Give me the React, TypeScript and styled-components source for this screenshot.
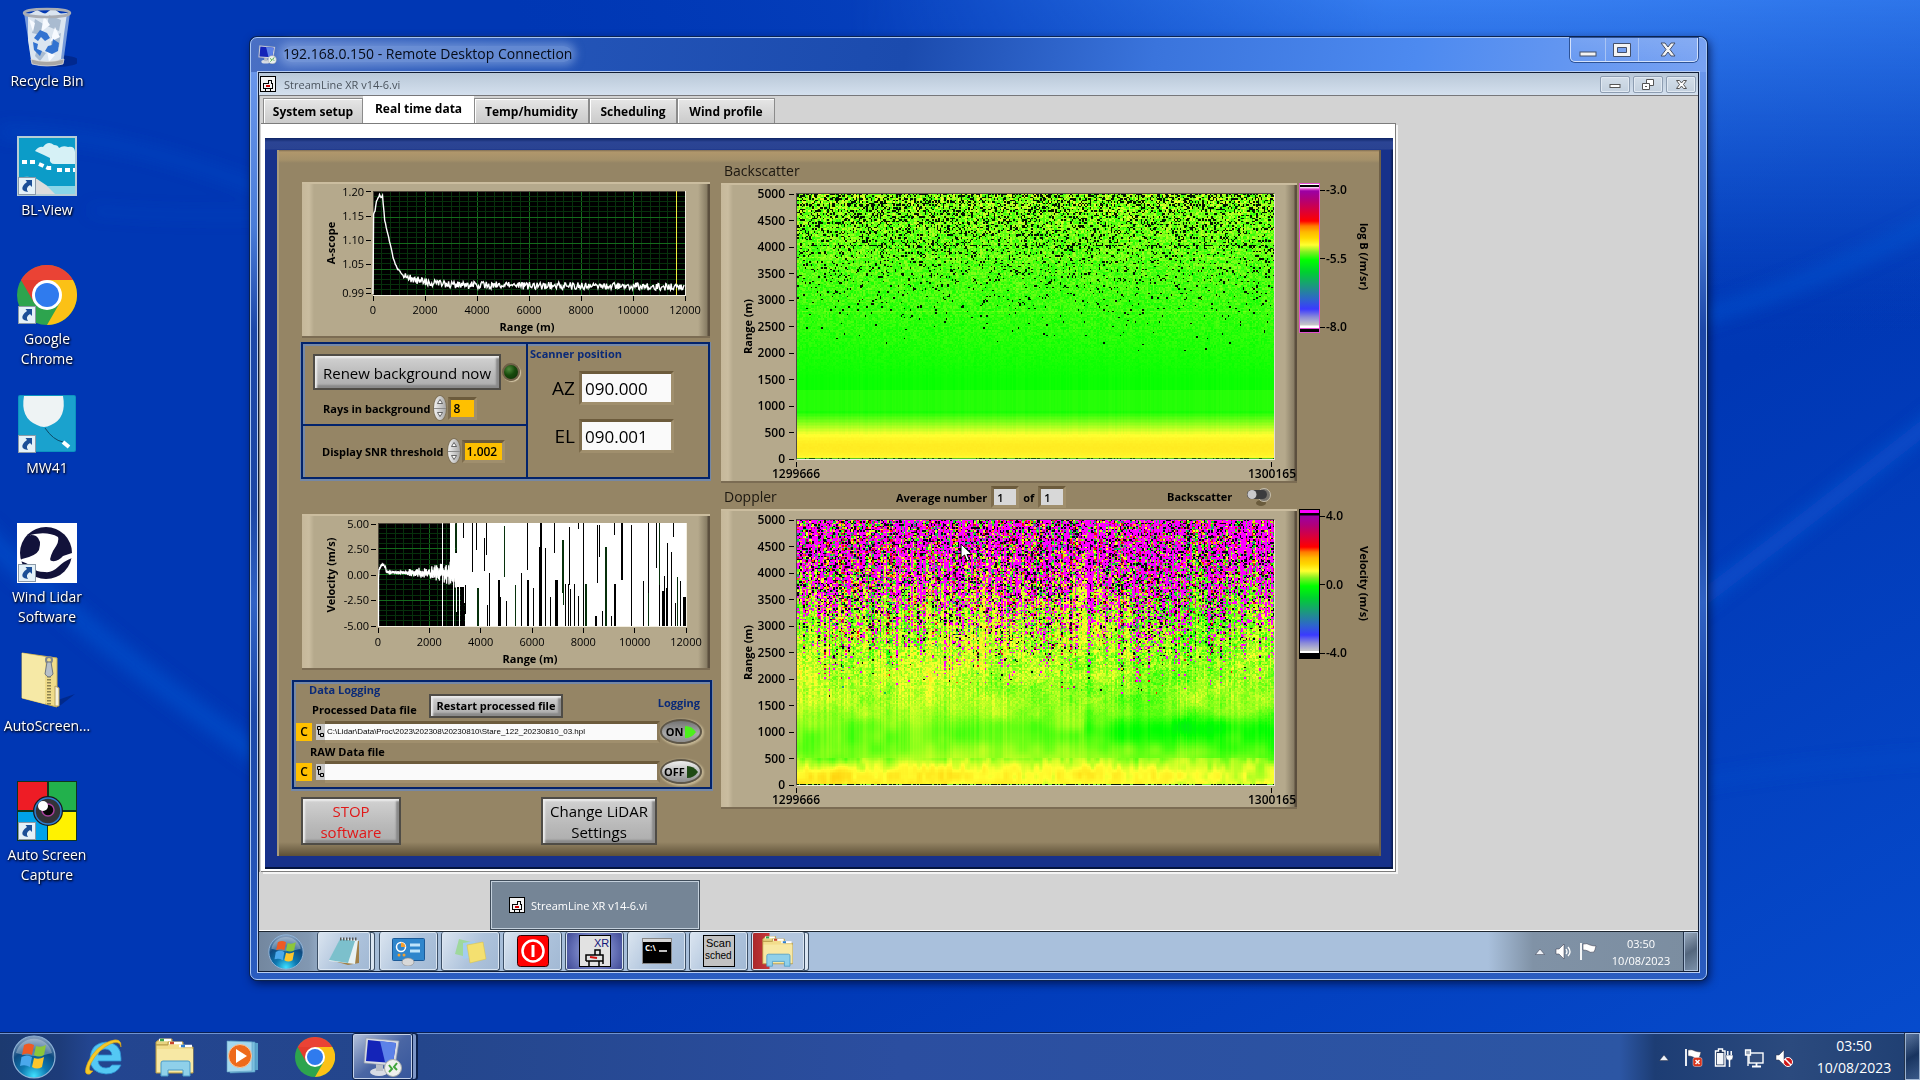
import React, { useEffect, useId, useRef, useState } from "react";
import styled, { createGlobalStyle, css } from "styled-components";

const ui = '"Open Sans", "Noto Sans", "DejaVu Sans", sans-serif';

const GlobalStyle = createGlobalStyle`
  *, *::before, *::after { box-sizing: border-box; }
  html, body, #root { height: 100%; }
  body { margin: 0; overflow: hidden; font-family: ${ui}; background: #0037b4; }
  button, input { font-family: inherit; }
  button { cursor: default; }
`;

/* ---------- desktop ---------- */

const Desktop = styled.div`
  position: relative;
  isolation: isolate;
  display: flex;
  flex-direction: column;
  min-height: 100vh;
`;

const WallpaperSvg = styled.svg`
  position: absolute;
  inset: 0;
  width: 100%;
  height: 100%;
  z-index: -1;
`;

const Workspace = styled.main`
  position: relative;
  flex: 1;
`;

const Shortcuts = styled.nav`
  display: flex;
  flex-direction: column;
  width: 94px;
  padding-top: 7px;
`;

const Shortcut = styled.button`
  display: flex;
  flex-direction: column;
  align-items: center;
  gap: 4px;
  height: 129px;
  padding: 0;
  border: 0;
  background: none;
  color: #fff;
  font-size: 14px;
  line-height: 20px;
  white-space: pre-line;
  text-shadow: 1px 1px 2px #000, 0 1px 3px #001a50;
  svg { flex: none; }
`;

/* ---------- remote desktop window ---------- */

const RemoteWindow = styled.section`
  position: absolute;
  inset: 37px 213px 52px 250px;
  display: flex;
  flex-direction: column;
  padding: 0 7px 7px;
  border: 1px solid #a8c6f4;
  border-radius: 7px;
  background: linear-gradient(100deg, #4a70c4 0, #2455b8 18%, #1b4bae 45%, #3a74dc 62%, #4d8af0 80%, #78a2f2 100%) top / 100% 34px no-repeat,
    linear-gradient(#6f9bee 0, #4a7cd8 20%, #1d48a8 31%, #1c46a4 50%, #3062c4 60%, #1c48a8 72%, #2a5cc0 100%);
  box-shadow: 0 0 0 1px #0a2350, 2px 3px 10px rgba(0, 5, 40, 0.75);
`;

const Caption = styled.header`
  display: flex;
  justify-content: space-between;
  height: 34px;
  padding-right: 1px;
`;

const CaptionTitle = styled.h1`
  display: flex;
  align-items: center;
  gap: 6px;
  height: 32px;
  margin: 0;
  font-size: 14px;
  font-weight: 400;
  color: #050b18;
  span { border-radius: 10px; background: rgba(160, 188, 236, 0.5); box-shadow: 0 0 8px 4px rgba(160, 188, 236, 0.5); line-height: 16px; }
`;

const CaptionButtons = styled.div`
  display: flex;
  height: 24px;
  border: 1px solid #d3e1fb;
  border-top: 0;
  border-radius: 0 0 5px 5px;
  background: linear-gradient(rgba(255, 255, 255, 0.12), rgba(255, 255, 255, 0.03));
  box-shadow: 0 0 0 1px #2d5296;
`;

const CaptionButton = styled.button<{ $w: number }>`
  display: grid;
  place-items: center;
  width: ${(p) => p.$w}px;
  padding: 0;
  border: 0;
  background: none;
  & + & { border-left: 1px solid #a9c4f4; }
`;

const Client = styled.div`
  flex: 1;
  display: flex;
  flex-direction: column;
  min-height: 0;
  border: 1px solid #101c34;
  outline: 1px solid #b7cdf3;
  background: #d3d3d3;
`;

const AppBar = styled.header`
  display: flex;
  align-items: center;
  justify-content: space-between;
  height: 23px;
  padding: 0 2px 0 1px;
  border-bottom: 1px solid #77777a;
  background: linear-gradient(#b9c8d8, #d4e0ee);
`;

const AppTitle = styled.h2`
  display: flex;
  align-items: center;
  gap: 8px;
  margin: 0;
  font-size: 11px;
  font-weight: 400;
  color: #4b545e;
`;

const AppButtons = styled.div`
  display: flex;
  gap: 3px;
`;

const AppButton = styled.button`
  display: grid;
  place-items: center;
  width: 30px;
  height: 17px;
  padding: 0;
  border: 1px solid #8d9db1;
  border-radius: 2px;
  background: linear-gradient(#d3dee9, #c3d0de);
  box-shadow: inset 0 0 0 1px #e1e9f2;
`;

/* ---------- tabs ---------- */

const AppBody = styled.div`
  flex: 1;
  display: flex;
  flex-direction: column;
  align-items: flex-start;
  border-left: 1px solid #8a8a8a;
  padding-left: 1px;
`;

const TabList = styled.div`
  display: flex;
  align-items: flex-end;
  height: 27px;
  padding-left: 2px;
`;

const Tab = styled.button<{ $w: number; $active?: boolean }>`
  width: ${(p) => p.$w}px;
  height: 25px;
  padding: 0;
  border: 1px solid #8b8b8b;
  border-bottom: 0;
  box-shadow: inset 1px 1px 0 #fff;
  background: linear-gradient(#e6e6e6, #d8d8d8 50%, #cbcbcb);
  font-size: 12px;
  font-weight: 700;
  color: #000;
  ${(p) =>
    p.$active &&
    css`
      height: 27px;
      padding-bottom: 3px;
      border-color: #fff;
      background: #fff;
    `}
`;

const TabPage = styled.div`
  align-self: stretch;
  margin-right: 302px;
  padding: 14px 2px 2px 4px;
  border: 1px solid #7c7c7c;
  border-left: 0;
  background: #fff;
  box-shadow: 2px 2px 0 #f4f4f4;
`;

const NavyFrame = styled.div`
  padding: 12px 12px 11px 12px;
  background: linear-gradient(#0e2464 0, #2b4494 4px, #2a4392 11px, transparent 12px), linear-gradient(to left, #07194c 0, #17318a 3px, #17318a 100%);
  border-bottom: 2px solid #04143f;
`;

const FrontPanel = styled.div`
  display: grid;
  grid-template-columns: 420px 1fr;
  column-gap: 9px;
  min-height: 706px;
  padding-left: 15px;
  background: linear-gradient(#7f6d54 0, #b0976c 2px, #a49069 10px, #958565 13px, #958565 calc(100% - 14px), #5d5037 100%);
  box-shadow: inset -2px 0 0 #6f6048, inset 2px 0 0 #a99a7b;
`;

const bevel = css`
  border-top: 2px solid #cbbd9f;
  border-bottom: 2px solid #7b6c53;
  background: linear-gradient(to left, #5b4f3e 0, #5b4f3e 2px, #877c64 3px, rgba(181, 169, 140, 0) 12px),
    linear-gradient(to right, #c6b89a 0, #cabda0 7px, #b5a98c 12px);
`;

const LeftColumn = styled.div`
  display: flex;
  flex-direction: column;
  padding-top: 32px;
`;

const RightColumn = styled.div`
  display: flex;
  flex-direction: column;
`;

const LinePanel = styled.div`
  ${bevel}
  margin: 0 2px 0 10px;
  height: 156px;
  svg { display: block; margin-top: -3px; }
`;

const grooveBox = css`
  border: 2px solid #02236c;
  box-shadow: inset 1px 1px 0 1px #7588a6, 0 1px 0 1px #7588a6;
`;

const ControlGroup = styled.div`
  ${grooveBox}
  display: grid;
  grid-template-columns: 225px 1fr;
  height: 137px;
  margin: 4px 2px 35px 9px;
`;

const ControlLeft = styled.div`
  display: grid;
  grid-template-rows: 82px 1fr;
  border-right: 2px solid #02236c;
`;

const RenewArea = styled.div`
  display: flex;
  flex-direction: column;
  gap: 6px;
  padding: 10px 0 0 10px;
  border-bottom: 2px solid #02236c;
`;

const ThresholdArea = styled.div`
  padding: 13px 0 0 19px;
`;

const FieldRow = styled.div<{ $inset?: number }>`
  display: flex;
  align-items: center;
  gap: 2px;
  padding-left: ${(p) => p.$inset ?? 0}px;
`;

const ButtonRow = styled.div`
  display: flex;
  align-items: center;
  gap: 1px;
`;

const steel = css`
  border: 2px solid #4f4c46;
  background: linear-gradient(#d2d2d2, #b9b9b9 60%, #adadad);
  box-shadow: inset 2px 2px 2px #ececec, inset -3px -3px 2px #8a8a8a;
  padding: 0;
  color: #000;
`;

const PushButton = styled.button<{ $w: number; $h: number; $color?: string }>`
  ${steel}
  width: ${(p) => p.$w}px;
  height: ${(p) => p.$h}px;
  padding-top: 2px;
  font-size: 15px;
  line-height: 21px;
  white-space: pre-line;
  color: ${(p) => p.$color ?? "#000"};
`;

const SmallButton = styled.button`
  ${steel}
  width: 134px;
  height: 24px;
  font-size: 11px;
  font-weight: 700;
`;

const Led = styled.span`
  width: 18px;
  height: 18px;
  border-radius: 50%;
  border: 2px solid #6f6148;
  background: radial-gradient(circle at 35% 30%, #4f8a3c, #174a0c 45%, #0c2c06);
  box-shadow: 1px 1px 1px #d6c8a8;
`;

const Caption11 = styled.label`
  font-size: 11px;
  font-weight: 700;
  color: #000;
  white-space: nowrap;
`;

const BlueCaption = styled.h3`
  margin: 0;
  font-size: 11px;
  line-height: 14px;
  font-weight: 700;
  color: #0a2a78;
`;

const Spinner = styled.span`
  display: grid;
  width: 12px;
  height: 24px;
  margin-left: 2px;
  border-radius: 50%;
  overflow: hidden;
  background: linear-gradient(to right, #f2f2f2, #a8a8a8);
  box-shadow: 0 0 0 1px #7f7259;
`;

const SpinButton = styled.button`
  display: grid;
  place-items: center;
  padding: 0;
  border: 0;
  background: none;
  & + & { border-top: 1px solid #8a8a8a; }
`;

const AmberInput = styled.input<{ $w: number }>`
  width: ${(p) => p.$w}px;
  height: 23px;
  padding: 0 0 0 2px;
  border: 3px solid;
  border-color: #6c5b3c #a08f6d #a08f6d #7d6c4c;
  background: #ffc000;
  font-size: 12px;
  font-weight: 600;
`;

const ScannerArea = styled.div`
  display: flex;
  flex-direction: column;
  padding: 3px 0 0 2px;
`;

const ScannerRow = styled.div`
  display: flex;
  align-items: center;
  justify-content: flex-end;
  gap: 4px;
  padding-right: 34px;
  margin-top: 10px;
  & + & { margin-top: 14px; }
`;

const ScannerLabel = styled.label`
  font-size: 19px;
  line-height: 24px;
`;

const ScannerInput = styled.input`
  width: 95px;
  height: 34px;
  padding: 0 0 0 3px;
  border: 3px solid;
  border-color: #6c5b3c #a08f6d #a08f6d #7d6c4c;
  background: #fafafa;
  font-size: 17px;
`;

const LoggingBox = styled.section`
  ${grooveBox}
  display: grid;
  grid-template-columns: 20px 1fr 50px;
  grid-template-rows: 37px 25px 15px 25px;
  height: 109px;
  margin-top: 10px;
  padding-left: 2px;
`;

const LoggingHead = styled.div`
  grid-column: 1 / 4;
  display: grid;
  grid-template-columns: 118px 1fr auto;
  padding: 0 10px 0 13px;
`;

const LoggingNames = styled.div`
  display: flex;
  flex-direction: column;
  gap: 5px;
  ${BlueCaption} { padding-top: 1px; }
  ${Caption11} { padding-left: 3px; line-height: 16px; }
`;

const HeadButtonCell = styled.div`
  padding: 11px 0 0 2px;
`;

const LoggingCaptionCell = styled.div`
  padding-top: 14px;
`;

const RawCaption = styled.div`
  grid-column: 1 / 4;
  display: flex;
  align-items: center;
  padding-left: 14px;
`;

const DriveButton = styled.button`
  align-self: center;
  width: 16px;
  height: 18px;
  padding: 0;
  border: 0;
  background: #ffc000;
  font-size: 12px;
  font-weight: 600;
`;

const PathField = styled.div`
  display: flex;
  align-items: center;
`;

const PathInput = styled.input`
  flex: 1;
  height: 22px;
  min-width: 0;
  padding: 0 0 0 2px;
  border: 3px solid;
  border-left: 0;
  border-color: #6c5b3c #8b7a5a #a08f6d #7d6c4c;
  background: #fafafa;
  font-family: "Liberation Sans", Arial, sans-serif;
  font-size: 8px;
`;

const Pill = styled.button<{ $on?: boolean }>`
  align-self: center;
  display: flex;
  align-items: center;
  justify-content: center;
  gap: 2px;
  width: 42px;
  height: 25px;
  padding: 0;
  border: 2px solid #5d5648;
  border-radius: 50%;
  background: ${(p) => (p.$on ? "linear-gradient(#747474, #a8a8a8 60%, #8d8d8d)" : "linear-gradient(#f0f0f0, #b4b4b4 60%, #8d8d8d)")};
  box-shadow: 1px 1px 2px 1px #c3b593;
  font-size: 11px;
  font-weight: 700;
`;

const ActionRow = styled.div`
  display: flex;
  justify-content: space-between;
  margin: 8px 55px 0 9px;
`;

/* ---------- heat maps ---------- */

const SectionBar = styled.div<{ $h: number }>`
  display: flex;
  align-items: center;
  height: ${(p) => p.$h}px;
  padding-left: 3px;
`;

const SectionTitle = styled.h3<{ $w?: number }>`
  width: ${(p) => (p.$w ? `${p.$w}px` : "auto")};
  margin: 0;
  font-size: 14px;
  font-weight: 400;
  color: #1c1710;
`;

const BackscatterHead = styled.div`
  display: flex;
  align-items: flex-end;
  height: 33px;
  padding: 0 0 3px 3px;
`;

const BarGroup = styled.div`
  display: flex;
  align-items: center;
  gap: 4px;
  width: 271px;
  padding-top: 2px;
`;

const AverageInput = styled.input`
  width: 28px;
  height: 22px;
  padding: 0 0 0 3px;
  border: 3px solid;
  border-color: #6c5b3c #a08f6d #a08f6d #7d6c4c;
  background: #d8d8d8;
  font-size: 11px;
  font-weight: 600;
`;

const SwitchLabel = styled.label`
  display: flex;
  align-items: center;
  gap: 14px;
  font-size: 11px;
  font-weight: 700;
  input { position: absolute; opacity: 0; }
`;

const ChartRow = styled.div`
  display: flex;
  height: 300px;
`;

const HeatPanel = styled.div`
  ${bevel}
  display: grid;
  grid-template-columns: 18px 39px 479px;
  grid-template-rows: 267px 24px;
  width: 576px;
  padding: 8px 0 0 18px;
`;

const SideLabel = styled.span<{ $down?: boolean }>`
  align-self: center;
  justify-self: center;
  writing-mode: vertical-rl;
  transform: ${(p) => (p.$down ? "none" : "rotate(180deg)")};
  font-size: 11px;
  line-height: 16px;
  font-weight: 700;
  white-space: nowrap;
`;

const YAxis = styled.div`
  display: flex;
  flex-direction: column;
  justify-content: space-between;
  align-items: flex-end;
  margin: -6px 0;
  padding-right: 2px;
`;

const YTick = styled.span`
  display: flex;
  align-items: center;
  gap: 4px;
  height: 14px;
  font-size: 12px;
  line-height: 14px;
  font-weight: 600;
  &::after { content: ""; width: 5px; height: 1px; background: #000; }
`;

const PlotArea = styled.div`
  position: relative;
  border: 1px solid;
  border-color: #4f4a40 #e5dfcf #f5f1e5 #4f4a40;
  canvas { display: block; width: 100%; height: 100%; image-rendering: pixelated; }
`;

const XAxis = styled.div`
  grid-column: 3;
  display: flex;
  justify-content: space-between;
  margin: 2px -21px 0 -24px;
  font-size: 12px;
  line-height: 14px;
  font-weight: 600;
`;

const XTick = styled.span`
  display: flex;
  flex-direction: column;
  align-items: center;
  &::before { content: ""; width: 1px; height: 5px; background: #000; }
`;

const Cursor = styled.svg`
  position: absolute;
  left: 163px;
  top: 23px;
`;

const Ramp = styled.div<{ $kind: "log" | "vel" }>`
  width: 21px;
  height: 150px;
  margin-left: 2px;
  border: 1px solid ${(p) => (p.$kind === "log" ? "#e04fd0" : "#000")};
  background: ${(p) =>
    p.$kind === "log"
      ? "linear-gradient(#fff 0, #fff 1px, #000 1px, #000 3px, #fff 3px, #e04fd0 5px, #9c00a4 7px, #b0007a 15px, #f00 37px, #ff7a00 42px, #ffb800 48px, #ffd800 54px, #ffff30 61px, #80f020 68px, #0f0 76px, #00d030 88px, #20908a 104px, #2f62d0 116px, #3a3aff 125px, #8a8ad8 133px, #c8c8c8 141px, #fff 142px, #fff 144px, #e04fd0 144px, #e04fd0 145px, #000 145px)"
      : "linear-gradient(#ff00ff 0, #ff00ff 3px, #000 3px, #000 5px, #9c00a4 6px, #b0007a 15px, #f00 37px, #ff7a00 42px, #ffb800 48px, #ffd800 54px, #ffff30 61px, #80f020 68px, #0f0 76px, #00d030 88px, #20908a 104px, #2f62d0 116px, #3a3aff 125px, #8a8ad8 133px, #c8c8c8 141px, #fff 141px, #fff 143px, #000 143px)"};
`;

const RampScale = styled.div`
  display: flex;
  flex-direction: column;
  justify-content: space-between;
  width: 32px;
  height: 151px;
  font-size: 12px;
  line-height: 14px;
  font-weight: 600;
`;

const RampTick = styled.span`
  display: flex;
  align-items: center;
  gap: 1px;
  &::before { content: ""; width: 5px; height: 1px; background: #000; }
`;

const RampLabel = styled.div`
  display: flex;
  height: 148px;
  padding-left: 4px;
`;

/* ---------- inner desktop bottom ---------- */

const PreviewStrip = styled.div`
  display: flex;
  align-items: flex-end;
  height: 59px;
  padding-left: 231px;
  border-bottom: 1px solid #fff;
`;

const Preview = styled.button`
  display: flex;
  align-items: center;
  gap: 6px;
  width: 210px;
  height: 50px;
  padding: 0 0 0 18px;
  border: 1px solid #3f4c5a;
  box-shadow: inset 0 0 0 1px #c4d0dc;
  background: #758596;
  color: #fff;
  font-size: 11px;
`;

const InnerBar = styled.footer`
  display: flex;
  align-items: stretch;
  height: 40px;
  border-top: 1px solid #1d2630;
  background: linear-gradient(to right, #73879f 0, #8298b2 50px, #a4bbd6 70px, #a9c0dc 480px, #a9c0dc calc(100% - 210px), #8092a6 calc(100% - 165px), #7b8da0 100%);
`;

const InnerStart = styled.button`
  display: grid;
  place-items: center;
  width: 58px;
  padding: 0 5px 0 0;
  border: 0;
  background: none;
`;

const InnerTask = styled.button<{ $tone?: "xr" | "red"; $stack?: boolean }>`
  display: grid;
  place-items: center;
  width: ${(p) => (p.$stack ? 54 : 59)}px;
  margin-right: ${(p) => (p.$stack ? 8 : 3)}px;
  padding: 0;
  border: 1px solid #3c4f66;
  border-top: 0;
  border-radius: 3px;
  background: ${(p) =>
    p.$tone === "xr"
      ? "radial-gradient(circle, #aebbe4, #6672b8 60%, #3a4490)"
      : p.$tone === "red"
        ? "linear-gradient(to right, #a8282a 0, #c8383a 17px, #b3c6de 18px)"
        : "linear-gradient(120deg, #dbe5f0, #aec3dc 55%, #a2b9d4)"};
  box-shadow: inset 0 0 0 1px #dbe6f2${(p) => (p.$stack ? ", 4px 0 0 -1px #dbe6f2, 4px 0 0 0 #3c4f66" : "")};
`;

const InnerTray = styled.div`
  display: flex;
  align-items: center;
  gap: 6px;
  margin-left: auto;
`;

const Clock = styled.time<{ $size: number; $lh: number; $w: number }>`
  align-self: center;
  width: ${(p) => p.$w}px;
  font-size: ${(p) => p.$size}px;
  line-height: ${(p) => p.$lh}px;
  text-align: center;
  white-space: pre-line;
  color: #fff;
`;

const PeekButton = styled.button<{ $w: number }>`
  align-self: stretch;
  width: ${(p) => p.$w}px;
  padding: 0;
  border: 1px solid rgba(190, 210, 235, 0.75);
  background: linear-gradient(150deg, rgba(200, 215, 235, 0.35), rgba(10, 30, 60, 0.35) 50%, rgba(120, 150, 190, 0.3));
  box-shadow: -1px 0 0 #24344c;
`;

/* ---------- outer taskbar ---------- */

const Taskbar = styled.footer`
  display: flex;
  align-items: stretch;
  height: 48px;
  border-top: 1px solid #0a1f52;
  box-shadow: inset 0 1px 0 #6f93d2;
  background: linear-gradient(to right, #1c3a70 0, #1d3c7a 60px, #234590 90px, #24468c 420px, #2b4ea0 900px, #2c56a4 calc(100% - 300px), #1d3d74 calc(100% - 265px), #2b4a7e calc(100% - 130px), #1f3f72 100%);
`;

const TaskItem = styled.button<{ $w: number; $open?: boolean }>`
  display: grid;
  place-items: center;
  width: ${(p) => p.$w}px;
  padding: 0;
  border: 1px solid transparent;
  background: none;
  ${(p) =>
    p.$open &&
    css`
      margin-right: 5px;
      border-color: #0a1f4a;
      border-radius: 3px;
      background: linear-gradient(140deg, #b6c3dc, #4a66a4 50%, #36569c);
      box-shadow: inset 0 0 0 1px #c4d1e8, 4px 0 0 -1px #7d96c6, 5px 0 0 0 #0a1f4a;
    `}
`;

const Tray = styled.div`
  display: flex;
  align-items: center;
  gap: 11px;
  margin-left: auto;
  padding: 2px 10px 0 0;
`;

/* ---------- colour map and noise ---------- */

type RGB = [number, number, number];

const stops: [number, RGB][] = [
  [0, [200, 200, 200]],
  [0.12, [58, 58, 255]],
  [0.3, [32, 144, 138]],
  [0.48, [0, 255, 0]],
  [0.6, [255, 255, 48]],
  [0.7, [255, 190, 0]],
  [0.78, [255, 0, 0]],
  [1, [160, 0, 164]],
];

function ramp(t: number): RGB {
  if (t < 0) return [0, 0, 0];
  if (t > 1) return [255, 0, 255];
  for (let i = 1; i < stops.length; i++) {
    if (t <= stops[i][0]) {
      const [a, ca] = stops[i - 1];
      const [b, cb] = stops[i];
      const k = (t - a) / (b - a);
      return [0, 1, 2].map((n) => ca[n] + (cb[n] - ca[n]) * k) as RGB;
    }
  }
  return [160, 0, 164];
}

function rng(seed: number) {
  let s = seed;
  return () => {
    s = (s + 0x6d2b79f5) | 0;
    let t = Math.imul(s ^ (s >>> 15), 1 | s);
    t = (t + Math.imul(t ^ (t >>> 7), 61 | t)) ^ t;
    return ((t ^ (t >>> 14)) >>> 0) / 4294967296;
  };
}

function smoothField(seed: number, cols: number, rows: number) {
  const r = rng(seed);
  const g = Array.from({ length: (cols + 2) * (rows + 2) }, () => r() * 2 - 1);
  const ease = (t: number) => t * t * (3 - 2 * t);
  return (u: number, v: number) => {
    const x = u * cols;
    const y = v * rows;
    const xi = Math.floor(x);
    const yi = Math.floor(y);
    const fx = ease(x - xi);
    const fy = ease(y - yi);
    const at = (a: number, b: number) => g[b * (cols + 2) + a];
    const top = at(xi, yi) * (1 - fx) + at(xi + 1, yi) * fx;
    const low = at(xi, yi + 1) * (1 - fx) + at(xi + 1, yi + 1) * fx;
    return top * (1 - fy) + low * fy;
  };
}

const W = 318;
const H = 177;

type Sampler = (x: number, y: number) => RGB;

function backscatter(): Sampler {
  const r = rng(11);
  const column = Array.from({ length: W }, () => r() - 0.5);
  return (x, y) => {
    const h = 5000 * (1 - (y + 0.5) / H);
    if (h < 20) return r() < 0.4 ? [20, 90, 10] : [90, 200, 40];
    const pBlack = h > 1900 ? 0.33 * Math.pow((h - 1900) / 3100, 2) : 0;
    const band = Math.abs(h - 4020) < 15 ? 0.25 : 0;
    if (r() < pBlack + band) return [0, 20, 0];
    let t = 0.485 + column[x] * 0.005;
    const up = Math.max(0, (h - 1500) / 3500);
    t += r() * 0.1 * up + up * up * 0.015;
    if (Math.abs(h - 3800) < 20 || Math.abs(h - 2790) < 16) t += 0.015;
    if (h < 1300) t += 0.012;
    if (h < 900) {
      const k = Math.min(1, (900 - h) / 450);
      t = 0.49 + k * 0.112 + column[x] * 0.006;
    }
    if (h < 420) t = 0.605 + 0.022 * Math.sin(((420 - h) / 400) * Math.PI) + r() * 0.005;
    return ramp(t);
  };
}

function doppler(): Sampler {
  const r = rng(42);
  const column = Array.from({ length: W }, () => r() - 0.5);
  const bias = Array.from({ length: W }, () => r());
  const coarse = smoothField(7, 12, 9);
  const mid = smoothField(19, 36, 22);
  const fine = smoothField(23, 110, 30);
  const edge = smoothField(31, 60, 3);
  return (x, y) => {
    const u = x / W;
    const v = (y + 0.5) / H;
    const h = 5000 * (1 - v);
    if (h < 20) return r() < 0.6 ? [0, 30, 0] : [120, 230, 40];
    const reach = 2250 + edge(u, 0.2) * 450 + column[x] * 1200;
    const pNoise = h > reach ? Math.min(0.95, Math.pow((h - reach) / 1900, 1.1)) : h > 1700 && r() < 0.004 ? 1 : 0;
    if (r() < pNoise) {
      const n = r();
      const magenta = 0.5 + (bias[x] - 0.5) * 0.8;
      if (n < magenta) return [255, 0, 255];
      if (n < magenta + 0.19) return [10, 0, 20];
      return ramp(r() * 0.7 + 0.28);
    }
    let t = 0.56 + coarse(u, v) * 0.02 + mid(u, v) * 0.016;
    t += column[x] * 0.055 * Math.min(1, h / 2600);
    if (h > 1100) t += (r() - 0.5) * 0.1 * Math.min(1, (h - 1100) / 1500);
    const dip = Math.exp(-(((h - 1050) / 300) ** 2));
    const wide = Math.exp(-(((h - 800) / 420) ** 2));
    t -= 0.05 * dip * (u > 0.6 ? 1 : 0.35 + u * 0.3) + 0.02 * wide;
    if (u > 0.6 && h > 500) t -= 0.018 * Math.min(1, (u - 0.6) * 6);
    if (h < 500) t += 0.06 * Math.min(1, (500 - h) / 280) * (1.15 - u * 0.4) + fine(u, v) * 0.022;
    return ramp(t);
  };
}

function HeatMap({ sampler, label }: { sampler: () => Sampler; label: string }) {
  const ref = useRef<HTMLCanvasElement>(null);
  useEffect(() => {
    const ctx = ref.current?.getContext("2d");
    if (!ctx) return;
    const image = ctx.createImageData(W, H);
    const sample = sampler();
    for (let y = 0; y < H; y++) {
      for (let x = 0; x < W; x++) {
        const [a, b, c] = sample(x, y);
        image.data.set([a, b, c, 255], (y * W + x) * 4);
      }
    }
    ctx.putImageData(image, 0, 0);
  }, [sampler]);
  return <canvas ref={ref} width={W} height={H} role="img" aria-label={label} />;
}

const ranges = [5000, 4500, 4000, 3500, 3000, 2500, 2000, 1500, 1000, 500, 0];

function HeatChart({ sampler, label, children }: { sampler: () => Sampler; label: string; children?: React.ReactNode }) {
  return (
    <HeatPanel>
      <SideLabel>Range (m)</SideLabel>
      <YAxis>
        {ranges.map((n) => (
          <YTick key={n}>{n}</YTick>
        ))}
      </YAxis>
      <PlotArea>
        <HeatMap sampler={sampler} label={label} />
        {children}
      </PlotArea>
      <XAxis>
        <XTick>1299666</XTick>
        <XTick>1300165</XTick>
      </XAxis>
    </HeatPanel>
  );
}

function ColourScale({ kind, marks, label }: { kind: "log" | "vel"; marks: string[]; label: string }) {
  return (
    <>
      <Ramp $kind={kind} />
      <RampScale>
        {marks.map((m) => (
          <RampTick key={m}>{m}</RampTick>
        ))}
      </RampScale>
      <RampLabel>
        <SideLabel $down>{label}</SideLabel>
      </RampLabel>
    </>
  );
}

/* ---------- line charts ---------- */

const ChartSvg = styled.svg`
  font-family: ${ui};
  .n { font-size: 11px; }
  .b { font-size: 11px; font-weight: 700; }
`;

function Grid({ x, y, w, h, rows }: { x: number; y: number; w: number; h: number; rows: number }) {
  const minorX = Array.from({ length: 35 }, (_, i) => x + ((i + 1) * w) / 36);
  const minorY = Array.from({ length: rows * 5 - 1 }, (_, i) => y + ((i + 1) * h) / (rows * 5));
  return (
    <g shapeRendering="crispEdges">
      <rect x={x} y={y} width={w} height={h} fill="#000" />
      {minorX.map((v, i) => (
        <path key={`x${i}`} d={`M${v} ${y}v${h}`} stroke={i % 6 === 5 ? "#146a1c" : "#07300c"} />
      ))}
      {minorY.map((v, i) => (
        <path key={`y${i}`} d={`M${x} ${v}h${w}`} stroke={i % 5 === 4 ? "#146a1c" : "#07300c"} />
      ))}
      <path d={`M${x} ${y + h}V${y}H${x + w}`} stroke="#4b463b" fill="none" />
      <path d={`M${x} ${y + h}H${x + w}V${y}`} stroke="#f3eee0" fill="none" />
    </g>
  );
}

function RangeAxis({ x, w, y }: { x: number; w: number; y: number }) {
  return (
    <>
      {[0, 1, 2, 3, 4, 5, 6].map((i) => (
        <g key={i}>
          <path d={`M${x + (i * w) / 6} ${y}v5`} stroke="#000" shapeRendering="crispEdges" />
          <text className="n" x={x + (i * w) / 6} y={y + 18} textAnchor="middle">
            {i * 2000}
          </text>
        </g>
      ))}
    </>
  );
}

const decay: [number, number][] = [
  [71, 113], [71.6, 33], [73, 30], [74.5, 20], [77.5, 14], [79, 16], [80.5, 15], [82.7, 39], [86, 54], [88.8, 66],
  [91.7, 79], [95, 87], [101, 94], [109, 98], [123.5, 101], [152, 104], [383, 106],
];

function AScope() {
  const r = rng(5);
  const pts: string[] = [];
  for (let i = 1; i < decay.length; i++) {
    const [x0, y0] = decay[i - 1];
    const [x1, y1] = decay[i];
    const n = Math.max(1, Math.round((x1 - x0) * 1.3));
    for (let k = 0; k < n; k++) {
      const amp = x0 > 96 ? 7.5 : 1.5;
      pts.push(`${(x0 + ((x1 - x0) * k) / n).toFixed(1)},${(y0 + ((y1 - y0) * k) / n + (r() - 0.5) * amp).toFixed(1)}`);
    }
  }
  const marks: [string, number][] = [["1.20", 10.5], ["1.15", 35], ["1.10", 59], ["1.05", 83], ["0.99", 112]];
  return (
    <ChartSvg width="408" height="156" role="img" aria-label="A-scope against range">
      <Grid x={71} y={10} w={312} h={104} rows={4} />
      <path d="M374.5 10v104" stroke="#f2ea3a" shapeRendering="crispEdges" />
      <polyline points={pts.join(" ")} fill="none" stroke="#fff" strokeWidth="1.4" />
      {marks.map(([t, y]) => (
        <g key={t}>
          <text className="n" x="62" y={y + 4} textAnchor="end">{t}</text>
          <path d={`M64 ${y}h5`} stroke="#000" shapeRendering="crispEdges" />
        </g>
      ))}
      <path d="M64 107h5" stroke="#000" shapeRendering="crispEdges" />
      <RangeAxis x={71} w={312} y={115} />
      <text className="b" x="225" y="150" textAnchor="middle">Range (m)</text>
      <text className="b" transform="translate(33 62) rotate(-90)" textAnchor="middle">A-scope</text>
    </ChartSvg>
  );
}

/* Dark gaps in the saturated part of the velocity trace: x, top, bottom, width. */
const gaps: number[][] = [
  [154.3, 10, 38, 1], [160.5, 10, 25, 1], [170.3, 10, 59, 1], [174.3, 10, 37, 1], [182.2, 25, 58, 1], [184, 10, 42, 1],
  [201.5, 13, 64, 1], [224.6, 10, 57, 1], [236.5, 34, 113, 2], [238.2, 10, 113, 2], [242.5, 35, 113, 1], [252.3, 10, 40, 1],
  [259.5, 27, 80, 2], [267.4, 14, 72, 1], [275.5, 10, 16, 1], [281, 10, 113, 1], [294.8, 12, 70, 1], [297, 12, 44, 1],
  [303, 34, 113, 2], [311.7, 10, 22, 1], [319, 10, 67, 2], [329.4, 12, 113, 1], [345.6, 10, 113, 1], [353.6, 10, 55, 1],
  [357, 10, 84, 1], [365.4, 30, 113, 1], [368.7, 39, 113, 1], [371.4, 10, 24, 1], [159, 74, 113, 3], [162.5, 72, 101, 1],
  [174.6, 75, 113, 2], [185.4, 92, 113, 1], [187.4, 60, 113, 1], [196.4, 67, 113, 2], [198, 84, 113, 1], [204, 88, 113, 1],
  [213.3, 72, 113, 1], [219.4, 60, 113, 1], [225.4, 67, 113, 2], [231.4, 75, 113, 1], [248.4, 84, 113, 1], [252.8, 67, 113, 3],
  [261, 72, 92, 1], [263.2, 71, 113, 1], [265.5, 71, 113, 1], [268.2, 76, 113, 1], [272, 71, 113, 1], [275.5, 83, 113, 1],
  [282.5, 71, 113, 2], [293.4, 103, 113, 2], [300.4, 98, 113, 1], [309, 103, 113, 1], [312, 71, 113, 2], [340.6, 68, 113, 1],
  [346.4, 80, 113, 1], [356.5, 72, 113, 1], [359.7, 78, 113, 2], [361.5, 63, 113, 1], [363.8, 75, 113, 1], [373, 90, 113, 1],
  [375.4, 64, 113, 1], [378, 68, 113, 1], [380.5, 84, 113, 3],
];

function VelocityChart() {
  const r = rng(8);
  const trace: string[] = ["M76.5 113V66"];
  for (let x = 77; x < 154; x += 0.8) {
    const u = (x - 77) / 77;
    const mean = x < 84 ? 56 - Math.sin(((x - 77) / 7) * Math.PI) * 4 : 59 + u * 1.5;
    const amp = u < 0.35 ? 1.6 : 2 + Math.pow(u, 2.2) * 13;
    trace.push(`L${x.toFixed(1)} ${(mean - r() * amp).toFixed(1)}L${(x + 0.4).toFixed(1)} ${(mean + r() * amp).toFixed(1)}`);
  }
  const marks: [string, number][] = [["5.00", 11], ["2.50", 36], ["0.00", 62], ["-2.50", 87], ["-5.00", 113]];
  return (
    <ChartSvg width="408" height="156" role="img" aria-label="Velocity against range">
      <Grid x={76} y={10} w={308} h={103} rows={4} />
      <path d={trace.join("")} fill="none" stroke="#fff" strokeWidth="1.3" />
      <g fill="#fff" shapeRendering="crispEdges">
        <rect x="140" y="10" width="1" height="103" />
        <rect x="148" y="10" width="5" height="52" />
        <rect x="151" y="62" width="1" height="51" />
        <rect x="153" y="40" width="7" height="34" />
        <rect x="155" y="10" width="5" height="64" />
        <rect x="154" y="74" width="1" height="25" />
        <rect x="157" y="74" width="1" height="39" />
        <rect x="160" y="10" width="3" height="80" />
        <rect x="163" y="10" width="221" height="103" />
      </g>
      <g shapeRendering="crispEdges">
        {gaps.map(([x, a, b, w], i) => (
          <rect key={i} x={Math.round(x)} y={a} width={w} height={b - a} fill={i % 6 === 0 ? "#06300b" : "#000"} />
        ))}
      </g>
      {marks.map(([t, y]) => (
        <g key={t}>
          <text className="n" x="67" y={y + 4} textAnchor="end">{t}</text>
          <path d={`M69 ${y}h5`} stroke="#000" shapeRendering="crispEdges" />
        </g>
      ))}
      <RangeAxis x={76} w={308} y={115} />
      <text className="b" x="228" y="150" textAnchor="middle">Range (m)</text>
      <text className="b" transform="translate(33 62) rotate(-90)" textAnchor="middle">Velocity (m/s)</text>
    </ChartSvg>
  );
}

/* ---------- drawings ---------- */

function Wallpaper() {
  return (
    <WallpaperSvg viewBox="0 0 1920 1080" preserveAspectRatio="none" aria-hidden="true">
      <defs>
        <radialGradient id="wTop" cx="0.78" cy="-0.06" r="0.52" gradientTransform="matrix(1 0 0 0.75 0 0)">
          <stop offset="0" stopColor="#4a90ff" />
          <stop offset="0.35" stopColor="#2a74ec" stopOpacity="0.85" />
          <stop offset="1" stopColor="#0646c4" stopOpacity="0" />
        </radialGradient>
        <linearGradient id="wTopEdge" x1="0" y1="0" x2="0" y2="1">
          <stop offset="0" stopColor="#3a84f4" stopOpacity="0.85" />
          <stop offset="1" stopColor="#0348c8" stopOpacity="0" />
        </linearGradient>
        <linearGradient id="wSide" x1="0" y1="0" x2="1" y2="0">
          <stop offset="0" stopColor="#fff" stopOpacity="0" />
          <stop offset="0.5" stopColor="#fff" stopOpacity="1" />
        </linearGradient>
        <mask id="wMask"><rect x="850" width="1070" height="330" fill="url(#wSide)" /></mask>
        <linearGradient id="wLow" x1="0" y1="0" x2="1" y2="1">
          <stop offset="0.62" stopColor="#0a55d8" stopOpacity="0" />
          <stop offset="1" stopColor="#0a58dc" stopOpacity="0.65" />
        </linearGradient>
        <filter id="soft" x="-20%" y="-50%" width="140%" height="200%"><feGaussianBlur stdDeviation="8" /></filter>
      </defs>
      <rect width="1920" height="1080" fill="#0037b4" />
      <rect x="850" width="1070" height="330" fill="url(#wTopEdge)" mask="url(#wMask)" />
      <rect width="1920" height="1080" fill="url(#wTop)" opacity="0.4" />
      <rect width="1920" height="1080" fill="url(#wLow)" />
      <g filter="url(#soft)" fill="none" stroke="#0a58d4">
        <path d="M0 132Q130 132 300 205" strokeWidth="9" opacity="0.35" />
        <path d="M90 210Q180 218 300 214" strokeWidth="5" opacity="0.3" />
        <path d="M-20 530Q90 640 280 770Q420 860 600 960" strokeWidth="20" opacity="0.55" />
        <path d="M1690 320Q1800 290 1940 218" strokeWidth="16" opacity="0.5" />
        <path d="M1690 608Q1800 525 1940 415" strokeWidth="16" opacity="0.65" />
        <path d="M1690 784Q1800 764 1940 756" strokeWidth="5" opacity="0.5" />
      </g>
    </WallpaperSvg>
  );
}

function LinkArrow() {
  return (
    <g>
      <rect x="1.5" y="41.5" width="17" height="17" fill="#e4f1f8" stroke="#8b9aa8" />
      <path d="M8.5 44H15v7l-2-2q-5 3-2 7Q3 55 6 50q1-2 4-4z" fill="#1c4f96" />
    </g>
  );
}

const Icon60 = ({ children, arrow = true }: { children: React.ReactNode; arrow?: boolean }) => (
  <svg width="60" height="60" viewBox="0 0 60 60" aria-hidden="true">
    {children}
    {arrow && <LinkArrow />}
  </svg>
);

const BinIcon = () => (
  <Icon60 arrow={false}>
    <ellipse cx="40" cy="54" rx="22" ry="6" fill="#001a6a" opacity="0.5" />
    <path d="M7 6H53L46 57Q30 61 15 57z" fill="#9fbce6" opacity="0.75" />
    <path d="M11 8l9-5 8 4 8-6 8 6 6-1-3 21-3 25-8 4-12-1-10-2-3-20z" fill="#dbe5f0" />
    <path d="M18 12l10 6-4 10-9-2zM32 8l12 5-2 11-12-5zM34 30l10-4-2 14-8 2zM20 42l9 4-6 8-5-5z" fill="#a9bbd0" />
    <path d="M27 9l6 9-9 7zM38 20l5 10-10 5zM30 44l8 4-6 7zM12 12l6 4-2 9z" fill="#f7faff" />
    <path d="M17 31l6-8 7 3 3 5-5 3-4-4-3 4zM16 35l5 2-1 5 5 2-2 5-6-6zM28 44l3-5 4-1 1-6 6 4-1 8-6 3z" fill="#3272d0" />
    <ellipse cx="30" cy="6" rx="23" ry="4" fill="none" stroke="#a9adb4" strokeWidth="2.5" />
    <path d="M14 52Q30 57 47 52L46 57Q30 61 15 57z" fill="#a8a6a4" stroke="#e6e4e0" strokeWidth="0.7" />
  </Icon60>
);

const BlViewIcon = () => (
  <Icon60>
    <rect width="60" height="60" fill="#b6cdd6" />
    <rect x="2" y="2" width="56" height="56" fill="#0c9cc8" />
    <path d="M18 15q4-5 8-4 5-7 11-2 4 0 5 3 4-3 9-1 7-1 7 5v12H38q-6 0-5-6-6-3-15-7" fill="#d6f1f6" />
    <path d="M5 26H18M22 28l9 4h5M40 34H58" stroke="#fff" strokeWidth="4" strokeDasharray="5 3" fill="none" />
    <path d="M2 42q10-3 18 1l12 8 8 7H2z" fill="#dcdcdc" />
    <path d="M30 50H58v8H38z" fill="#8ad6e8" />
  </Icon60>
);

function ChromeArt() {
  return (
    <g>
      <circle cx="30" cy="30" r="30" fill="#2da44e" />
      <path d="M30 30L4 15A30 30 0 0 1 56 15z" fill="#ea4335" />
      <path d="M30 15H56A30 30 0 0 1 30 60L43 37.5z" fill="#fbc116" />
      <path d="M4 15L17 37.5L30 30V15z" fill="#e33b2e" />
      <circle cx="30" cy="30" r="15" fill="#fff" />
      <circle cx="30" cy="30" r="12" fill="#2f7bee" />
    </g>
  );
}

const ChromeIcon = () => <Icon60><ChromeArt /></Icon60>;

const BalloonIcon = () => (
  <Icon60>
    <rect x="1" y="1" width="58" height="57" rx="2" fill="#0b93c0" />
    <rect x="2" y="2" width="56" height="55" rx="1" fill="#1aa2ce" />
    <path d="M7 2H46Q50 24 34 31Q27 35 20 31Q3 24 7 2z" fill="#eef3f4" />
    <path d="M28 34Q36 46 46 48" stroke="#0d4a66" fill="none" />
    <path d="M46 48l6 5" stroke="#fff" strokeWidth="4" />
  </Icon60>
);

const LidarIcon = () => (
  <Icon60>
    <rect width="60" height="60" fill="#fff" />
    <circle cx="29" cy="30" r="26" fill="#12123a" />
    <path d="M9 13q20-6 32 1 2 4-5 14-5 10-1 10 6 1 11-5l9-3v5q-8 3-14 9-6 6-13 5-10 0-11-4-8-6-15-7l3-2q14-3 17-9 3-10-3-14-4-2-10 0z" fill="#fff" />
  </Icon60>
);

const ZipIcon = () => (
  <Icon60 arrow={false}>
    <path d="M35 50L58 42L40 56z" fill="#001f70" opacity="0.6" />
    <path d="M5 1L40 6V55L5 46z" fill="#efdc8a" stroke="#c9b055" />
    <path d="M5 1L28 5V52L5 46z" fill="#f6e9a6" />
    <path d="M38 34l4 2v18h-4z" fill="#f6f2dc" stroke="#b8a460" />
    <path d="M32 12V54" stroke="#8d8350" strokeWidth="4" strokeDasharray="1.5 1.5" />
    <circle cx="32" cy="8" r="3" fill="none" stroke="#7f868e" strokeWidth="2" />
    <path d="M30 10h4l2 12q-4 6-8 0z" fill="#b8c0c8" stroke="#6f7780" />
  </Icon60>
);

const CaptureIcon = () => (
  <Icon60>
    <rect width="60" height="60" fill="#10361c" />
    <path d="M1 1H30V29H1z" fill="#ee1c25" />
    <path d="M32 1H59V29H32z" fill="#22b14c" />
    <path d="M1 31H30V59H1z" fill="#00a2e8" />
    <path d="M31 31H59V59H31z" fill="#fff200" />
    <circle cx="31" cy="30" r="15" fill="#1a1a1e" />
    <circle cx="31" cy="30" r="13" fill="#333338" stroke="#2f7fd0" strokeWidth="1.5" />
    <circle cx="31" cy="29" r="6" fill="#060606" stroke="#a8409c" strokeWidth="1.5" />
    <circle cx="26" cy="25" r="5" fill="#fff" />
  </Icon60>
);

const StartOrb = ({ size }: { size: number }) => {
  const id = useId();
  return (
    <svg width={size} height={size} viewBox="0 0 44 44" aria-hidden="true">
      <defs>
        <radialGradient id={id} cx="0.5" cy="0.95" r="0.9">
          <stop offset="0" stopColor="#3fe0ff" />
          <stop offset="0.35" stopColor="#0e78b0" />
          <stop offset="0.7" stopColor="#0e4a80" />
          <stop offset="1" stopColor="#7d98b8" />
        </radialGradient>
      </defs>
      <circle cx="22" cy="22" r="21" fill={`url(#${id})`} stroke="#8fb4d8" strokeWidth="1.2" />
      <path d="M4 18A18.5 18.5 0 0 1 40 18Q22 24 4 18z" fill="#fff" opacity="0.3" />
      <path d="M12 10Q17 7 22 10L20 20Q15 17 10 20z" fill="#ee5a24" />
      <path d="M24 11Q29 13 34 10L32 20Q27 23 22 20z" fill="#8cc63a" />
      <path d="M9.5 22Q15 19 20 22L18 32Q13 29 8 31z" fill="#4aa8ec" />
      <path d="M22 23Q27 25 32 22L30 32Q25 35 20 32z" fill="#fdc62c" />
    </svg>
  );
};

const IeIcon = () => (
  <svg width="40" height="38" viewBox="0 0 40 38" aria-hidden="true">
    <path d="M37 23H14q1 7 8 7 4 0 6-3h9q-4 9-15 9Q6 35 6 20 7 5 22 4q15 1 15 16zM14 17H28q-1-6-7-6t-7 6z" fill="#54c8f4" stroke="#2b8fd0" strokeWidth="0.8" />
    <path d="M6 36Q-2 38 4 24Q12 8 26 3Q38-1 37 9Q36 2 26 6Q14 12 7 25Q3 34 9 33z" fill="#f6c928" stroke="#d9a010" strokeWidth="0.6" />
  </svg>
);

const FolderIcon = ({ size }: { size: number }) => (
  <svg width={size} height={size} viewBox="0 0 40 40" aria-hidden="true">
    <path d="M1 5L5 2H17V8H1z" fill="#e8d480" stroke="#b89c48" />
    <path d="M4 3H16" stroke="#fff" strokeWidth="2.5" />
    <path d="M5 3h4" stroke="#3aa24c" strokeWidth="2.5" />
    <path d="M1 8H13V5H28V10H38V36H1z" fill="#f2dd8c" stroke="#b89c48" />
    <path d="M14 6H27" stroke="#fff" strokeWidth="2.5" />
    <path d="M15 6h4" stroke="#c8442c" strokeWidth="2.5" />
    <path d="M24 9H37" stroke="#fff" strokeWidth="2.5" />
    <path d="M26 9h4" stroke="#2f7fd0" strokeWidth="2.5" />
    <path d="M2 12H38V35H2z" fill="#f7e8a4" />
    <path d="M6 39V26q0-2 2-2H33q2 0 2 2V39H28V33H13V39z" fill="#8fd0ea" stroke="#4a9ac8" />
  </svg>
);

const PlayerIcon = () => (
  <svg width="34" height="34" viewBox="0 0 34 34" aria-hidden="true">
    <path d="M8 2L32 3V30L8 32z" fill="#5aa4cc" />
    <path d="M4 1L29 2V32L4 33z" fill="#7cc0e0" stroke="#4a90b8" strokeWidth="0.6" />
    <path d="M1 1L26 2V31L1 32z" fill="#a4d8ee" stroke="#5a9cc0" strokeWidth="0.6" />
    <circle cx="14" cy="16" r="11.5" fill="#ee6a1c" stroke="#f8c8a0" />
    <path d="M10 9L21 16L10 23z" fill="#fff" />
  </svg>
);

const RdpIcon = ({ size }: { size: number }) => (
  <svg width={size} height={size} viewBox="0 0 40 40" aria-hidden="true">
    <ellipse cx="16" cy="35" rx="9" ry="4" fill="#d8dce4" />
    <path d="M13 27h7v7h-7z" fill="#b8bec8" />
    <path d="M3 1L36 4L32 29L1 26z" fill="#d8dce4" stroke="#8e98a8" strokeWidth="0.7" />
    <path d="M5 3L33 6L30 26L3 24z" fill="#1424b8" />
    <path d="M17 4L33 6L30 26L22 25z" fill="#5c82e8" />
    <circle cx="30" cy="31" r="8.5" fill="#eef0ee" stroke="#a4aaa8" />
    <path d="M26 28l3 4-3 3M34 26l-3 4 3 3" fill="none" stroke="#3fa43a" strokeWidth="2" />
  </svg>
);

const ViIcon = ({ size }: { size: number }) => (
  <svg width={size} height={size} viewBox="0 0 16 16" aria-hidden="true" shapeRendering="crispEdges">
    <rect x="0.5" y="0.5" width="15" height="15" fill="#f4f4f4" stroke="#000" />
    <path d="M3.500 13V7.500H8.500V4.500h3v3h1V13M3 12.500h10M5.500 15v-3M10.500 15v-3" fill="none" stroke="#000" />
    <path d="M6 9l4 2M10 9l-4 2" stroke="#c00" />
  </svg>
);

const XrIcon = () => (
  <svg width="32" height="32" viewBox="0 0 32 32" aria-hidden="true">
    <rect x="0.5" y="0.5" width="31" height="31" fill="#e2e2e2" stroke="#000" />
    <text x="15" y="12" fontSize="11" fontFamily="Liberation Sans, Arial, sans-serif" fill="#14147a">XR</text>
    <path d="M7 26V20H16V15H21V20H24V29M7 26H24M10 26V31M20 26V31M16 20H21" fill="none" stroke="#000" strokeWidth="1.5" />
    <path d="M11 22l7 1" stroke="#d01010" strokeWidth="2" />
  </svg>
);

const StopIcon = () => (
  <svg width="32" height="32" viewBox="0 0 32 32" aria-hidden="true">
    <rect x="0.5" y="0.5" width="31" height="31" rx="3" fill="#f00" stroke="#300" />
    <circle cx="16" cy="16" r="10.5" fill="none" stroke="#fff" strokeWidth="2.5" />
    <path d="M16 10v12" stroke="#fff" strokeWidth="3" />
  </svg>
);

const NotepadIcon = () => (
  <svg width="32" height="30" viewBox="0 0 32 30" aria-hidden="true">
    <path d="M14 3L31 5V27L20 29L2 24z" fill="#a08048" />
    <path d="M13 2L30 4L27 28L1 25z" fill="#e8f2f4" />
    <path d="M12 3L27 5L20 27L1 24z" fill="#7cc0cc" />
    <path d="M12 3H29" stroke="#555" strokeWidth="3" strokeDasharray="1.5 1.5" />
  </svg>
);

const PanelIcon = () => (
  <svg width="33" height="29" viewBox="0 0 33 29" aria-hidden="true">
    <rect x="0.5" y="1.5" width="32" height="22" rx="1" fill="#2f86cc" stroke="#1b5a98" />
    <circle cx="9" cy="10" r="4.5" fill="none" stroke="#fff" strokeWidth="1.5" />
    <path d="M9 10V5.5A4.5 4.5 0 0 1 13.5 10z" fill="#f4a030" />
    <path d="M18 8H28M18 14H28" stroke="#bfe4fa" strokeWidth="3" />
    <circle cx="7" cy="18" r="1.5" fill="#f4a030" />
    <circle cx="12" cy="18" r="1.5" fill="#f4a030" />
    <ellipse cx="16" cy="25" rx="6" ry="4" fill="#d8d8d8" stroke="#888" strokeWidth="0.6" />
  </svg>
);

const NotesIcon = () => (
  <svg width="32" height="26" viewBox="0 0 32 26" aria-hidden="true">
    <path d="M4 1L16 4L12 19L0 16z" fill="#9ed89c" />
    <path d="M8 5L20 3L22 19L8 21z" fill="#a4cdf0" />
    <path d="M12 7L28 4L31 21L15 25z" fill="#f4e070" stroke="#d8c040" strokeWidth="0.5" />
  </svg>
);

const ConsoleIcon = () => (
  <svg width="30" height="26" viewBox="0 0 30 26" aria-hidden="true">
    <rect x="0.5" y="0.5" width="29" height="25" fill="#000" stroke="#888" />
    <rect x="1" y="1" width="28" height="3" fill="#d8d8d8" />
    <text x="3" y="13" fontSize="8" fontWeight="700" fill="#fff">C:\</text>
    <path d="M17 13h8" stroke="#fff" strokeWidth="1.5" />
  </svg>
);

const SchedIcon = () => (
  <svg width="32" height="32" viewBox="0 0 32 32" aria-hidden="true" fontFamily="Liberation Sans, Arial, sans-serif">
    <rect x="0.5" y="0.5" width="31" height="31" fill="#c2c2c2" stroke="#000" />
    <text x="3" y="12" fontSize="11">Scan</text>
    <text x="2" y="24" fontSize="10">sched</text>
  </svg>
);

const UpArrow = () => (
  <svg width="18" height="6" viewBox="-4.5 0 18 6" aria-hidden="true"><path d="M0 5.5L4.5 0L9 5.5z" fill="#eef2f8" stroke="#223" strokeWidth="0.4" /></svg>
);

const Flag = ({ bad }: { bad?: boolean }) => (
  <svg width="19" height="20" viewBox="0 0 19 20" aria-hidden="true">
    <path d="M2 1v17" stroke="#fff" strokeWidth="1.8" />
    <path d="M4 2q4-1 7 1 3 1 6 1-1 4-2 6-4 1-6-1-2-1-5-1z" fill="#fff" stroke="#334" strokeWidth="0.5" />
    {bad && (
      <g>
        <rect x="9" y="9.5" width="9" height="9" rx="2" fill="#d8341c" stroke="#fff" strokeWidth="0.4" />
        <path d="M11.500 12l4 4M15.500 12l-4 4" stroke="#fff" strokeWidth="1.5" />
      </g>
    )}
  </svg>
);

const Speaker = ({ muted }: { muted?: boolean }) => (
  <svg width="18" height="20" viewBox="0 0 18 20" aria-hidden="true">
    <path d="M1 7h3l5-5v15l-5-5H1z" fill="#fff" stroke="#334" strokeWidth="0.5" />
    {muted ? (
      <g>
        <circle cx="13" cy="14" r="4.5" fill="#d01818" stroke="#fff" />
        <path d="M10 11l6 6" stroke="#fff" strokeWidth="1.5" />
      </g>
    ) : (
      <path d="M11 7q2 3 0 5M13 5q4 5 0 9" fill="none" stroke="#fff" strokeWidth="1.3" />
    )}
  </svg>
);

const Battery = () => (
  <svg width="19" height="20" viewBox="0 0 19 20" aria-hidden="true">
    <path d="M1.500 3h3V1h4v2h2.500v15h-9.500z" fill="#1f3358" stroke="#fff" strokeWidth="1.4" />
    <path d="M3 5h6.500v11.500H3z" fill="#f4f6fa" />
    <path d="M12 7h7v2q0 3-3 3.500h-1q-3-.5-3-3.500z" fill="#fff" stroke="#1f3358" strokeWidth="0.5" />
    <path d="M13.800 3v4M17.200 3v4M15.500 12v7" stroke="#fff" strokeWidth="1.500" />
  </svg>
);

const Network = () => (
  <svg width="20" height="20" viewBox="0 0 20 20" aria-hidden="true">
    <rect x="5" y="5" width="14" height="10" fill="#35507e" stroke="#fff" strokeWidth="1.4" />
    <path d="M8 18.5h9M12.5 15v3" stroke="#fff" strokeWidth="1.8" />
    <path d="M1.5 2h5v5h-5zM4 7v11" fill="#9aa6b8" stroke="#fff" strokeWidth="1.3" />
  </svg>
);

const shortcuts = [
  { name: "Recycle Bin", icon: <BinIcon /> },
  { name: "BL-View", icon: <BlViewIcon /> },
  { name: "Google\nChrome", icon: <ChromeIcon /> },
  { name: "MW41", icon: <BalloonIcon /> },
  { name: "Wind Lidar\nSoftware", icon: <LidarIcon /> },
  { name: "AutoScreen...", icon: <ZipIcon /> },
  { name: "Auto Screen\nCapture", icon: <CaptureIcon /> },
];

const tabs = [
  { name: "System setup", w: 100 },
  { name: "Real time data", w: 111 },
  { name: "Temp/humidity", w: 115 },
  { name: "Scheduling", w: 88 },
  { name: "Wind profile", w: 98 },
];

function Spin({ label }: { label: string }) {
  return (
    <Spinner>
      <SpinButton type="button" aria-label={`Increase ${label}`}>
        <svg width="6" height="5" viewBox="0 0 6 5"><path d="M3 0.5L5.5 4.5H0.5z" fill="#fff" stroke="#444" strokeWidth="0.8" /></svg>
      </SpinButton>
      <SpinButton type="button" aria-label={`Decrease ${label}`}>
        <svg width="6" height="5" viewBox="0 0 6 5"><path d="M3 4.5L5.5 0.5H0.5z" fill="#fff" stroke="#444" strokeWidth="0.8" /></svg>
      </SpinButton>
    </Spinner>
  );
}

function PathRow({ id, label, value, on }: { id: string; label: string; value: string; on: boolean }) {
  return (
    <>
      <DriveButton type="button">C</DriveButton>
      <PathField>
        <svg width="9" height="16" viewBox="0 0 9 16" aria-hidden="true">
          <rect width="9" height="16" fill="#c9c9c9" />
          <path d="M1.5 2.5h3v3h-3zM4.500 9.500h3v3h-3zM2.500 5.500v5h2" fill="none" stroke="#000" />
        </svg>
        <PathInput id={id} aria-label={label} defaultValue={value} />
      </PathField>
      <Pill type="button" $on={on} aria-pressed={on}>
        {on ? "ON" : "OFF"}
        <svg width="11" height="12" viewBox="0 0 11 12" aria-hidden="true">
          <path d="M0 0Q7 0 11 6Q7 12 0 12z" fill={on ? "#4cf01c" : "#1f4a14"} />
        </svg>
      </Pill>
    </>
  );
}

export default function App() {
  const [active, setActive] = useState("Real time data");
  return (
    <Desktop>
      <GlobalStyle />
      <Wallpaper />
      <Workspace>
        <Shortcuts aria-label="Desktop">
          {shortcuts.map((s) => (
            <Shortcut key={s.name} type="button">
              {s.icon}
              {s.name}
            </Shortcut>
          ))}
        </Shortcuts>

        <RemoteWindow>
          <Caption>
            <CaptionTitle>
              <RdpIcon size={19} />
              <span>192.168.0.150 - Remote Desktop Connection</span>
            </CaptionTitle>
            <CaptionButtons>
              <CaptionButton $w={34} type="button" aria-label="Minimise">
                <svg width="18" height="16" viewBox="0 0 18 16"><rect x="1" y="10" width="16" height="4" fill="#f4f4f4" stroke="#44506a" /></svg>
              </CaptionButton>
              <CaptionButton $w={33} type="button" aria-label="Maximise">
                <svg width="18" height="16" viewBox="0 0 18 16"><path d="M0.5 1.5h17v13h-17zM4.5 5.5v5h9v-5z" fill="#f4f4f4" fillRule="evenodd" stroke="#44506a" /></svg>
              </CaptionButton>
              <CaptionButton $w={59} type="button" aria-label="Close">
                <svg width="16" height="15" viewBox="0 0 16 15"><path d="M1 1h4l3 4 3-4h4l-5 6.5 5 6.5h-4l-3-4-3 4H1l5-6.5z" fill="#f4f4f4" stroke="#44506a" /></svg>
              </CaptionButton>
            </CaptionButtons>
          </Caption>

          <Client>
            <AppBar>
              <AppTitle>
                <ViIcon size={16} />
                StreamLine XR v14-6.vi
              </AppTitle>
              <AppButtons>
                <AppButton type="button" aria-label="Minimise VI">
                  <svg width="12" height="10" viewBox="0 0 12 10"><rect x="1" y="5.5" width="10" height="3" fill="#fff" stroke="#555" /></svg>
                </AppButton>
                <AppButton type="button" aria-label="Restore VI">
                  <svg width="12" height="11" viewBox="0 0 12 11"><path d="M4.5 0.5h7v6h-7z" fill="#fff" stroke="#555" /><path d="M0.5 4.5h7v6h-7z" fill="#fff" stroke="#555" /><path d="M3 7.5h2" stroke="#555" /></svg>
                </AppButton>
                <AppButton type="button" aria-label="Close VI">
                  <svg width="11" height="9" viewBox="0 0 11 9"><path d="M0.5 0.5h3l2 2.5 2-2.5h3L7.5 4.5l3 4h-3l-2-2.5-2 2.5h-3l3-4z" fill="#fff" stroke="#555" /></svg>
                </AppButton>
              </AppButtons>
            </AppBar>

            <AppBody>
              <TabList role="tablist">
                {tabs.map((t) => (
                  <Tab key={t.name} type="button" role="tab" $w={t.w} $active={t.name === active} aria-selected={t.name === active} onClick={() => setActive(t.name)}>
                    {t.name}
                  </Tab>
                ))}
              </TabList>
              <TabPage role="tabpanel">
                <NavyFrame>
                  <FrontPanel>
                    <LeftColumn>
                      <LinePanel><AScope /></LinePanel>
                      <ControlGroup>
                        <ControlLeft>
                          <RenewArea>
                            <ButtonRow>
                              <PushButton type="button" $w={188} $h={36}>Renew background now</PushButton>
                              <Led />
                            </ButtonRow>
                            <FieldRow $inset={10}>
                              <Caption11 htmlFor="rays">Rays in background</Caption11>
                              <Spin label="rays" />
                              <AmberInput id="rays" $w={29} defaultValue="8" />
                            </FieldRow>
                          </RenewArea>
                          <ThresholdArea>
                            <FieldRow>
                              <Caption11 htmlFor="snr">Display SNR threshold</Caption11>
                              <Spin label="threshold" />
                              <AmberInput id="snr" $w={43} defaultValue="1.002" />
                            </FieldRow>
                          </ThresholdArea>
                        </ControlLeft>
                        <ScannerArea>
                          <BlueCaption>Scanner position</BlueCaption>
                          <ScannerRow>
                            <ScannerLabel htmlFor="az">AZ</ScannerLabel>
                            <ScannerInput id="az" defaultValue="090.000" />
                          </ScannerRow>
                          <ScannerRow>
                            <ScannerLabel htmlFor="el">EL</ScannerLabel>
                            <ScannerInput id="el" defaultValue="090.001" />
                          </ScannerRow>
                        </ScannerArea>
                      </ControlGroup>
                      <LinePanel><VelocityChart /></LinePanel>
                      <LoggingBox>
                        <LoggingHead>
                          <LoggingNames>
                            <BlueCaption>Data Logging</BlueCaption>
                            <Caption11 htmlFor="proc">Processed Data file</Caption11>
                          </LoggingNames>
                          <HeadButtonCell>
                            <SmallButton type="button">Restart processed file</SmallButton>
                          </HeadButtonCell>
                          <LoggingCaptionCell><BlueCaption>Logging</BlueCaption></LoggingCaptionCell>
                        </LoggingHead>
                        <PathRow id="proc" label="Processed Data file" value="C:\Lidar\Data\Proc\2023\202308\20230810\Stare_122_20230810_03.hpl" on />
                        <RawCaption><Caption11 htmlFor="raw">RAW Data file</Caption11></RawCaption>
                        <PathRow id="raw" label="RAW Data file" value="" on={false} />
                      </LoggingBox>
                      <ActionRow>
                        <PushButton type="button" $w={100} $h={48} $color="#e01818">{"STOP\nsoftware"}</PushButton>
                        <PushButton type="button" $w={116} $h={48}>{"Change LiDAR\nSettings"}</PushButton>
                      </ActionRow>
                    </LeftColumn>

                    <RightColumn>
                      <BackscatterHead><SectionTitle>Backscatter</SectionTitle></BackscatterHead>
                      <ChartRow>
                        <HeatChart sampler={backscatter} label="Backscatter by range and time" />
                        <ColourScale kind="log" marks={["-3.0", "-5.5", "-8.0"]} label="log B (/m/sr)" />
                      </ChartRow>
                      <SectionBar $h={26}>
                        <SectionTitle $w={172}>Doppler</SectionTitle>
                        <BarGroup>
                          <Caption11 htmlFor="avg">Average number</Caption11>
                          <AverageInput id="avg" defaultValue="1" />
                          <Caption11 htmlFor="avgOf">of</Caption11>
                          <AverageInput id="avgOf" defaultValue="1" />
                        </BarGroup>
                        <SwitchLabel>
                          Backscatter
                          <input type="checkbox" />
                          <svg width="26" height="20" viewBox="0 0 26 20" aria-hidden="true">
                            <ellipse cx="15" cy="17" rx="5" ry="3" fill="#6a5b3c" />
                            <circle cx="18" cy="9" r="6.5" fill="#77736c" stroke="#c8c0ac" />
                            <rect x="1" y="4" width="20" height="9" rx="4.5" fill="#3c3c3e" />
                            <circle cx="6" cy="8.5" r="4.5" fill="#c9c9cc" />
                          </svg>
                        </SwitchLabel>
                      </SectionBar>
                      <ChartRow>
                        <HeatChart sampler={doppler} label="Doppler velocity by range and time">
                          <Cursor width="13" height="19" viewBox="0 0 13 19" aria-hidden="true">
                            <path d="M1 1V15L4.5 12L7 18L9.5 17L7 11.5H12z" fill="#fff" stroke="#000" />
                          </Cursor>
                        </HeatChart>
                        <ColourScale kind="vel" marks={["4.0", "0.0", "-4.0"]} label="Velocity (m/s)" />
                      </ChartRow>
                    </RightColumn>
                  </FrontPanel>
                </NavyFrame>
              </TabPage>
            </AppBody>

            <PreviewStrip>
              <Preview type="button">
                <ViIcon size={16} />
                StreamLine XR v14-6.vi
              </Preview>
            </PreviewStrip>

            <InnerBar>
              <InnerStart type="button" aria-label="Remote start"><StartOrb size={36} /></InnerStart>
              <InnerTask type="button" aria-label="Notepad" $stack><NotepadIcon /></InnerTask>
              <InnerTask type="button" aria-label="Control Panel"><PanelIcon /></InnerTask>
              <InnerTask type="button" aria-label="Sticky Notes"><NotesIcon /></InnerTask>
              <InnerTask type="button" aria-label="Stop"><StopIcon /></InnerTask>
              <InnerTask type="button" aria-label="StreamLine XR" $tone="xr"><XrIcon /></InnerTask>
              <InnerTask type="button" aria-label="Command Prompt"><ConsoleIcon /></InnerTask>
              <InnerTask type="button" aria-label="Scan scheduler"><SchedIcon /></InnerTask>
              <InnerTask type="button" aria-label="Explorer" $tone="red" $stack><FolderIcon size={32} /></InnerTask>
              <InnerTray>
                <UpArrow />
                <Speaker />
                <Flag />
              </InnerTray>
              <Clock $size={11} $lh={17} $w={86}>{"03:50\n10/08/2023"}</Clock>
              <PeekButton $w={14} type="button" aria-label="Show remote desktop" />
            </InnerBar>
          </Client>
        </RemoteWindow>
      </Workspace>

      <Taskbar>
        <TaskItem $w={67} type="button" aria-label="Start"><StartOrb size={44} /></TaskItem>
        <TaskItem $w={74} type="button" aria-label="Internet Explorer"><IeIcon /></TaskItem>
        <TaskItem $w={68} type="button" aria-label="Windows Explorer"><FolderIcon size={40} /></TaskItem>
        <TaskItem $w={68} type="button" aria-label="Media Player"><PlayerIcon /></TaskItem>
        <TaskItem $w={75} type="button" aria-label="Google Chrome">
          <svg width="40" height="40" viewBox="0 0 60 60" aria-hidden="true"><ChromeArt /></svg>
        </TaskItem>
        <TaskItem $w={61} $open type="button" aria-label="Remote Desktop Connection"><RdpIcon size={40} /></TaskItem>
        <Tray>
          <UpArrow />
          <Flag bad />
          <Battery />
          <Network />
          <Speaker muted />
        </Tray>
        <Clock $size={14} $lh={22} $w={102}>{"03:50\n10/08/2023"}</Clock>
        <PeekButton $w={15} type="button" aria-label="Show desktop" />
      </Taskbar>
    </Desktop>
  );
}
